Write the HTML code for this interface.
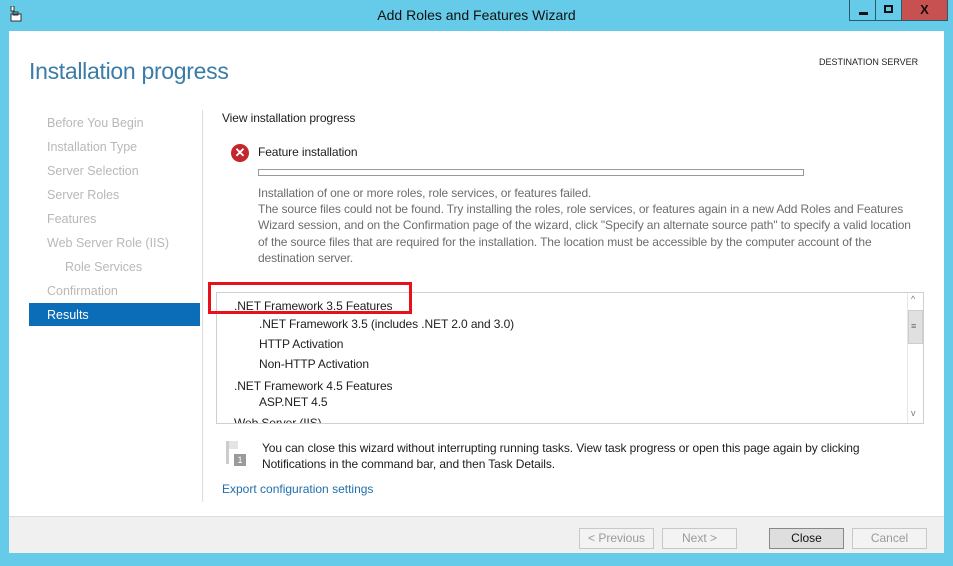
<!DOCTYPE html>
<html><head><style>
*{margin:0;padding:0;box-sizing:border-box}
body{width:953px;height:566px;overflow:hidden;background:#66cbe8;font-family:"Liberation Sans",sans-serif;position:relative}
.a{position:absolute;white-space:nowrap}
.t{font-size:12px;color:#1e1e1e;letter-spacing:-0.1px}
.g{font-size:12px;color:#6d6d6d;letter-spacing:-0.12px}
.nav{font-size:12.5px;color:#b8b8b8}
.btn{position:absolute;top:528px;height:21px;border:1px solid #c8c8c8;background:#f3f3f3;color:#9a9a9a;font-size:12px;text-align:center;line-height:19px}
</style></head><body>
<div class="a" style="left:10px;top:6px;width:12px;height:15px">
<svg width="12" height="16"><rect x="1" y="0" width="3" height="5" fill="#fff" stroke="#333" stroke-width="1"/><rect x="1" y="8" width="10" height="7" fill="#fff" stroke="#333"/><rect x="3" y="6" width="5" height="3" fill="none" stroke="#333"/></svg></div>
<div class="a" style="left:0;width:953px;top:7px;text-align:center;font-size:14px;color:#111">Add Roles and Features Wizard</div>
<div class="a" style="left:849px;top:0;width:27px;height:21px;border:1px solid #2b5a6b;border-top:none"><div class="a" style="left:9px;top:12px;width:9px;height:3px;background:#111"></div></div>
<div class="a" style="left:876px;top:0;width:26px;height:21px;border:1px solid #2b5a6b;border-top:none;border-left:none"><div class="a" style="left:8px;top:5px;width:9px;height:8px;border:2px solid #111"></div></div>
<div class="a" style="left:902px;top:0;width:46px;height:21px;background:#c75050;border:1px solid #2b5a6b;border-top:none;border-left:none;color:#111;font-weight:bold;font-size:13px;text-align:center;line-height:20px">X</div>
<div class="a" style="left:9px;top:31px;width:935px;height:486px;background:#fff"></div>
<div class="a" style="left:9px;top:516px;width:935px;height:37px;background:#f0f0f0;border-top:1px solid #dcdcdc"></div>
<div class="a" style="left:29px;top:58px;font-size:23px;color:#3a7ca8;letter-spacing:-0.3px">Installation progress</div>
<div class="a" style="left:819px;top:57px;font-size:9px;color:#222">DESTINATION SERVER</div>
<div class="a nav" style="left:47px;top:116px">Before You Begin</div>
<div class="a nav" style="left:47px;top:140px">Installation Type</div>
<div class="a nav" style="left:47px;top:164px">Server Selection</div>
<div class="a nav" style="left:47px;top:188px">Server Roles</div>
<div class="a nav" style="left:47px;top:212px">Features</div>
<div class="a nav" style="left:47px;top:236px">Web Server Role (IIS)</div>
<div class="a nav" style="left:65px;top:260px">Role Services</div>
<div class="a nav" style="left:47px;top:284px">Confirmation</div>
<div class="a" style="left:29px;top:303px;width:171px;height:23px;background:#0b6db8"></div>
<div class="a" style="left:47px;top:308px;font-size:12.5px;color:#fff">Results</div>
<div class="a" style="left:202px;top:110px;width:1px;height:392px;background:#dcdcdc"></div>
<div class="a t" style="left:222px;top:111px">View installation progress</div>
<div class="a" style="left:231px;top:144px;width:18px;height:18px;border-radius:50%;background:#c4262e;color:#fff;font-weight:bold;font-size:13px;text-align:center;line-height:18px">✕</div>
<div class="a t" style="left:258px;top:145px">Feature installation</div>
<div class="a" style="left:258px;top:169px;width:546px;height:7px;border:1px solid #999"></div>
<div class="a g" style="left:258px;top:185px;line-height:16.2px">Installation of one or more roles, role services, or features failed.<br>The source files could not be found. Try installing the roles, role services, or features again in a new Add Roles and Features<br>Wizard session, and on the Confirmation page of the wizard, click "Specify an alternate source path" to specify a valid location<br>of the source files that are required for the installation. The location must be accessible by the computer account of the<br>destination server.</div>
<div class="a" style="left:216px;top:292px;width:708px;height:132px;border:1px solid #cfcfcf;overflow:hidden">
<div class="a t" style="left:17px;top:6px">.NET Framework 3.5 Features</div>
<div class="a t" style="left:42px;top:24px">.NET Framework 3.5 (includes .NET 2.0 and 3.0)</div>
<div class="a t" style="left:42px;top:44px">HTTP Activation</div>
<div class="a t" style="left:42px;top:64px">Non-HTTP Activation</div>
<div class="a t" style="left:17px;top:86px">.NET Framework 4.5 Features</div>
<div class="a t" style="left:42px;top:102px">ASP.NET 4.5</div>
<div class="a t" style="left:17px;top:123px">Web Server (IIS)</div>
<div class="a" style="left:690px;top:0;width:17px;height:131px;background:#fff;border-left:1px solid #e6e6e6"></div>
<div class="a" style="left:691px;top:17px;width:15px;height:34px;background:#e0e0e0;border:1px solid #cdcdcd"></div>
<div class="a" style="left:694px;top:1px;font-size:9px;color:#777">^</div>
<div class="a" style="left:694px;top:28px;font-size:9px;color:#666">≡</div>
<div class="a" style="left:694px;top:115px;font-size:9px;color:#777">v</div>
</div>
<div class="a" style="left:208px;top:282px;width:204px;height:32px;border:3px solid #e8101a"></div>
<div class="a" style="left:226px;top:441px;width:3px;height:23px;background:#ccc"></div>
<div class="a" style="left:229px;top:441px;width:9px;height:8px;background:#e4e4e4"></div>
<div class="a" style="left:234px;top:454px;width:12px;height:12px;background:#9a9a9a;color:#fff;font-size:9px;text-align:center;line-height:12px">1</div>
<div class="a t" style="left:262px;top:440px;line-height:16px">You can close this wizard without interrupting running tasks. View task progress or open this page again by clicking<br>Notifications in the command bar, and then Task Details.</div>
<div class="a" style="left:222px;top:482px;font-size:12px;color:#1f6fad">Export configuration settings</div>
<div class="btn" style="left:579px;width:75px">&lt; Previous</div>
<div class="btn" style="left:662px;width:75px">Next &gt;</div>
<div class="btn" style="left:769px;width:75px;background:#dedede;border-color:#888;color:#111">Close</div>
<div class="btn" style="left:852px;width:75px">Cancel</div>
</body></html>
